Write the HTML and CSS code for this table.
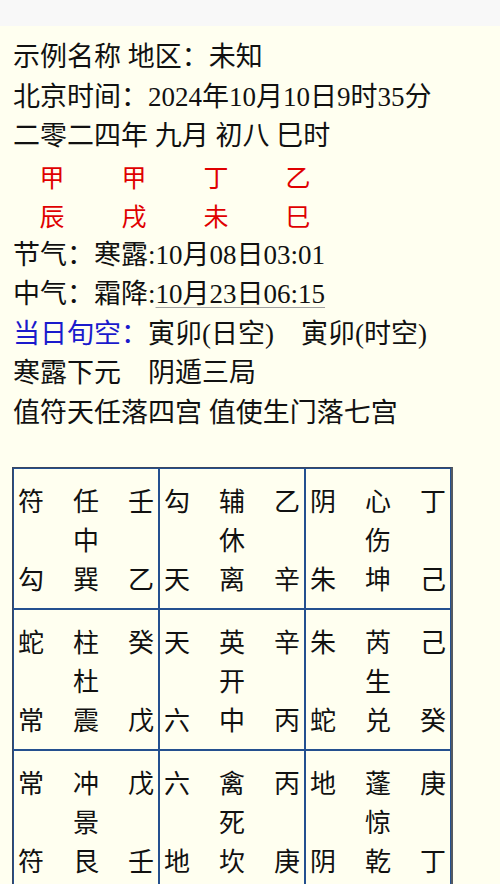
FILE: index.html
```html
<!DOCTYPE html>
<html lang="zh">
<head>
<meta charset="utf-8">
<link rel="stylesheet" href="styles.css">
</head>
<body>
<div class="topbar"></div>
<main class="page">
  <div class="info">
    <div class="line">示例名称 地区：未知</div>
    <div class="line">北京时间：2024年10月10日9时35分</div>
    <div class="line">二零二四年 九月 初八 巳时</div>
    <div class="stems">
      <span>甲</span><span>甲</span><span>丁</span><span>乙</span>
    </div>
    <div class="stems">
      <span>辰</span><span>戌</span><span>未</span><span>巳</span>
    </div>
    <div class="line">节气：寒露:10月08日03:01</div>
    <div class="line">中气：霜降:<span class="uline">10月23日06:15</span></div>
    <div class="line"><span class="blue">当日旬空：</span>寅卯(日空)　寅卯(时空)</div>
    <div class="line">寒露下元　阴遁三局</div>
    <div class="line">值符天任落四宫 值使生门落七宫</div>
  </div>

  <table class="pan">
    <tr>
      <td><div class="cell"><span>符</span><span>任</span><span>壬</span><span></span><span>中</span><span></span><span>勾</span><span>巽</span><span>乙</span></div></td>
      <td><div class="cell"><span>勾</span><span>辅</span><span>乙</span><span></span><span>休</span><span></span><span>天</span><span>离</span><span>辛</span></div></td>
      <td><div class="cell"><span>阴</span><span>心</span><span>丁</span><span></span><span>伤</span><span></span><span>朱</span><span>坤</span><span>己</span></div></td>
    </tr>
    <tr>
      <td><div class="cell"><span>蛇</span><span>柱</span><span>癸</span><span></span><span>杜</span><span></span><span>常</span><span>震</span><span>戊</span></div></td>
      <td><div class="cell"><span>天</span><span>英</span><span>辛</span><span></span><span>开</span><span></span><span>六</span><span>中</span><span>丙</span></div></td>
      <td><div class="cell"><span>朱</span><span>芮</span><span>己</span><span></span><span>生</span><span></span><span>蛇</span><span>兑</span><span>癸</span></div></td>
    </tr>
    <tr>
      <td><div class="cell"><span>常</span><span>冲</span><span>戊</span><span></span><span>景</span><span></span><span>符</span><span>艮</span><span>壬</span></div></td>
      <td><div class="cell"><span>六</span><span>禽</span><span>丙</span><span></span><span>死</span><span></span><span>地</span><span>坎</span><span>庚</span></div></td>
      <td><div class="cell"><span>地</span><span>蓬</span><span>庚</span><span></span><span>惊</span><span></span><span>阴</span><span>乾</span><span>丁</span></div></td>
    </tr>
  </table>
</main>
</body>
</html>
```

FILE: styles.css
```css
html, body {
  margin: 0;
  padding: 0;
  background: #fffff0;
}

.topbar {
  height: 26px;
  background: #f8f8f8;
}

.page {
  padding: 12px 0 0 0;
  font-family: "Liberation Serif", "Noto Sans CJK SC", serif;
  font-size: 27px;
  color: #111;
}

.info {
  padding-left: 13px;
}

.line {
  line-height: 39.5px;
  height: 39.5px;
  white-space: pre;
}

.stems {
  display: flex;
  height: 39.5px;
  line-height: 39.5px;
  margin-left: -2px;
  color: #e00000;
  font-family: "Noto Sans CJK SC", sans-serif;
  font-size: 25px;
}

.stems span {
  width: 82px;
  text-align: center;
}

.uline {
  text-decoration: underline;
  text-decoration-color: #a0a0a0;
  text-decoration-thickness: 1px;
  text-underline-offset: 4px;
}

.blue {
  color: #1a1acc;
}

.pan {
  margin: 34px 0 0 12px;
  width: 441px;
  table-layout: fixed;
  border-collapse: separate;
  border-spacing: 0;
  border: 1px solid #3a4660;
  border-right: 2px solid #555a60;
  border-bottom: 2px solid #555a60;
}

.pan td {
  border: 1px solid #24508f;
  padding: 11px 4px;
  vertical-align: top;
}

.cell {
  display: grid;
  grid-template-columns: 1fr 1fr 1fr;
  font-family: "Noto Sans CJK SC", sans-serif;
  font-size: 26px;
  line-height: 39px;
  color: #111;
}

.cell span {
  height: 39px;
}

.cell span:nth-child(3n+1) { text-align: left; }
.cell span:nth-child(3n+2) { text-align: center; }
.cell span:nth-child(3n) { text-align: right; }
```
